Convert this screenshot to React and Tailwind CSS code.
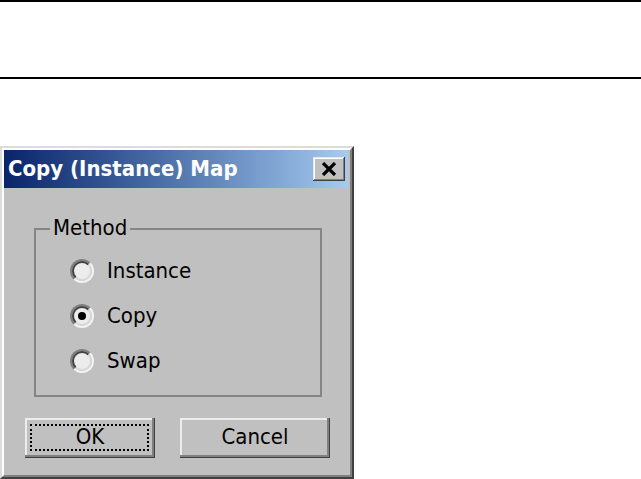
import React from "react";

const FONT = { fontFamily: '"DejaVu Sans Condensed", "DejaVu Sans", sans-serif' };

function Radio({ checked, label }) {
  return (
    <div className="flex items-center h-[45px]">
      <div className="ml-[34px] w-[24px] h-[24px] rounded-full border-2 border-t-[#808080] border-l-[#808080] border-r-[#f4f4f4] border-b-[#f4f4f4] rotate-[0deg]">
        <div className="w-full h-full rounded-full border-2 border-t-[#404040] border-l-[#404040] border-r-[#d8d8d8] border-b-[#d8d8d8] bg-[#ececec] flex items-center justify-center">
          {checked && <div className="w-[8px] h-[8px] rounded-full bg-black" />}
        </div>
      </div>
      <span className="ml-[13px] text-[22px] leading-[26px] text-black">{label}</span>
    </div>
  );
}

function Button({ children, width, focus }) {
  return (
    <div
      className={`relative h-[40px] ${width} bg-[#c0c0c0] shadow-[inset_-1px_-1px_0_#404040,inset_-3px_-3px_0_#808080,inset_2px_2px_0_#ececec] flex items-center justify-center text-[22px] leading-[26px] text-black`}
    >
      {focus && (
        <div className="absolute left-[5px] right-[6px] top-[6px] bottom-[7px] border-2 border-dotted border-black" />
      )}
      <span className="-mt-[3px]">{children}</span>
    </div>
  );
}

export default function App() {
  return (
    <div className="w-[641px] h-[479px] bg-white overflow-hidden flex flex-col" style={FONT}>
      <div className="h-[2px] bg-black shrink-0" />
      <div className="h-[2px] bg-black shrink-0 mt-[75px]" />
      <div className="mt-[67px] w-[354px] h-[333px] shrink-0 border-2 border-t-[#dcdcdc] border-l-[#dcdcdc] border-r-[#404040] border-b-[#404040]">
        <div className="w-full h-full border-2 border-t-white border-l-white border-r-[#808080] border-b-[#808080] bg-[#c0c0c0] flex flex-col">
          <div className="h-[38px] mr-[2px] bg-gradient-to-r from-[#0a246a] to-[#a6caf0] flex items-center justify-between pl-[4px] pr-[3px]">
            <span className="text-white font-bold text-[22px] leading-[26px]">Copy (Instance) Map</span>
            <div className="w-[32px] h-[24px] bg-[#c0c0c0] shadow-[inset_-1px_-1px_0_#404040,inset_1px_1px_0_#e8e8e8,inset_-2px_-2px_0_#808080,inset_2px_2px_0_#ffffff] flex items-center justify-center">
              <svg width="16" height="14" viewBox="0 0 16 14" className="-mt-[1px]">
                <path d="M2 1 L14 13 M14 1 L2 13" stroke="black" strokeWidth="3.2" />
              </svg>
            </div>
          </div>
          <div className="relative mt-[40px] ml-[30px] w-[288px] h-[169px] border-2 border-[#858585]">
            <span className="absolute left-[14px] -top-[15px] px-[3px] bg-[#c0c0c0] text-[22px] leading-[26px] text-black">
              Method
            </span>
            <div className="flex flex-col pt-[18px]">
              <Radio label="Instance" />
              <Radio label="Copy" checked />
              <Radio label="Swap" />
            </div>
          </div>
          <div className="flex mt-[21px] ml-[21px] gap-[25px]">
            <Button width="w-[130px]" focus>OK</Button>
            <Button width="w-[150px]">Cancel</Button>
          </div>
        </div>
      </div>
    </div>
  );
}
